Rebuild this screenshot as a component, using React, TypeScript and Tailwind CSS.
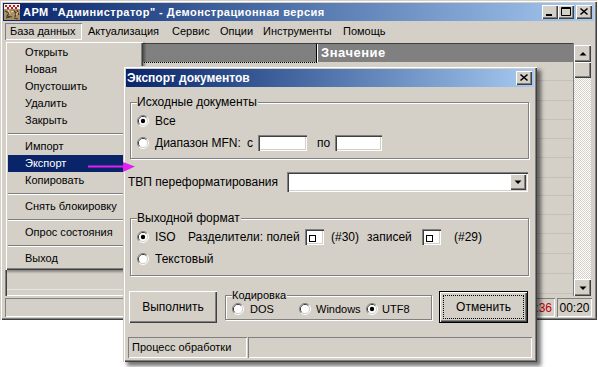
import React from "react";

const FRAME =
  "shadow-[inset_1px_1px_0_#d4d0c8,inset_2px_2px_0_#ffffff,inset_-1px_-1px_0_#404040,inset_-2px_-2px_0_#808080]";
const MENU_FRAME =
  "shadow-[inset_1px_1px_0_#d4d0c8,inset_2px_2px_0_#ffffff,inset_-1px_-1px_0_#404040,inset_-2px_-2px_0_#808080,2px_2px_2px_rgba(0,0,0,0.35)]";
const DIALOG_FRAME =
  "shadow-[inset_1px_1px_0_#d4d0c8,inset_2px_2px_0_#ffffff,inset_-1px_-1px_0_#404040,inset_-2px_-2px_0_#808080,4px_4px_4px_rgba(0,0,0,0.55)]";
const RAISED =
  "shadow-[inset_1px_1px_0_#ffffff,inset_-1px_-1px_0_#404040,inset_-2px_-2px_0_#808080]";
const SUNKEN =
  "shadow-[inset_1px_1px_0_#808080,inset_2px_2px_0_#404040,inset_-1px_-1px_0_#ffffff,inset_-2px_-2px_0_#d4d0c8]";
const THIN_SUNKEN = "shadow-[inset_1px_1px_0_#808080,inset_-1px_-1px_0_#ffffff]";
const GROUP =
  "border border-[#808080] shadow-[1px_1px_0_#ffffff,inset_1px_1px_0_#ffffff]";

function Radio({ checked = false }: { checked?: boolean }) {
  return (
    <svg width="12" height="12" viewBox="0 0 12 12" className="shrink-0">
      <path d="M2.11 9.89A5.5 5.5 0 0 1 9.89 2.11" fill="none" stroke="#808080" />
      <path d="M9.89 2.11A5.5 5.5 0 0 1 2.11 9.89" fill="none" stroke="#ffffff" />
      <path d="M2.82 9.18A4.5 4.5 0 0 1 9.18 2.82" fill="none" stroke="#404040" />
      <path d="M9.18 2.82A4.5 4.5 0 0 1 2.82 9.18" fill="none" stroke="#d4d0c8" />
      <circle cx="6" cy="6" r="4" fill="#ffffff" />
      {checked && <circle cx="6" cy="6" r="2.2" fill="#000000" />}
    </svg>
  );
}

function CapBtn({ kind }: { kind: "min" | "max" | "close" }) {
  return (
    <div className={`w-[16px] h-[14px] bg-[#d4d0c8] ${RAISED}`}>
      <svg width="16" height="14" viewBox="0 0 16 14">
        {kind === "min" && <rect x="4" y="9" width="6" height="2" fill="#000000" />}
        {kind === "max" && (
          <path d="M3.5 2.5h9v8h-9z M3 3.5h10" stroke="#000000" fill="none" />
        )}
        {kind === "close" && (
          <path d="M4.5 3.5l7 6M11.5 3.5l-7 6" stroke="#000000" strokeWidth="1.6" />
        )}
      </svg>
    </div>
  );
}

function Arrow({ dir }: { dir: "up" | "down" }) {
  return (
    <svg width="16" height="16" viewBox="0 0 16 16">
      {dir === "down" ? (
        <polygon points="4.5,6.5 11.5,6.5 8,10" fill="#000000" />
      ) : (
        <polygon points="4.5,9.5 11.5,9.5 8,6" fill="#000000" />
      )}
    </svg>
  );
}

function AppIcon() {
  return (
    <svg width="16" height="16" viewBox="0 0 16 16" className="shrink-0">
      <rect x="0" y="0" width="16" height="16" fill="#a89066" />
      <rect x="0" y="0" width="16" height="5" fill="#f4f0f0" />
      <rect x="1" y="1" width="2" height="2" fill="#c01818" />
      <rect x="5" y="1" width="2" height="2" fill="#c01818" />
      <rect x="9" y="1" width="2" height="2" fill="#c01818" />
      <rect x="13" y="1" width="2" height="2" fill="#c01818" />
      <rect x="3" y="3" width="2" height="2" fill="#c01818" />
      <rect x="7" y="3" width="2" height="2" fill="#c01818" />
      <rect x="11" y="3" width="2" height="2" fill="#c01818" />
      <path d="M1 7l4 2l-2 3l5 1M9 6l3 3l-1 4M13 6l2 5M2 14l4-1M10 14l4 1" stroke="#4a3a22" strokeWidth="1.2" fill="none" />
      <path d="M4 6l2 4M7 8l3-1M12 11l2-3" stroke="#e8dcc0" strokeWidth="1" fill="none" />
    </svg>
  );
}

const menuItems: (string | null)[] = [
  "Открыть",
  "Новая",
  "Опустошить",
  "Удалить",
  "Закрыть",
  null,
  "Импорт",
  "Экспорт",
  "Копировать",
  null,
  "Снять блокировку",
  null,
  "Опрос состояния",
  null,
  "Выход",
];

const menuBar = [
  { t: "Актуализация", w: "w-[84px]" },
  { t: "Сервис", w: "w-[48px]" },
  { t: "Опции", w: "w-[43px]" },
  { t: "Инструменты", w: "w-[80px]" },
  { t: "Помощь", w: "w-[60px]" },
];

const rowHeights = [19, 20, 19, 19, 19, 20, 18, 19, 19, 20, 20, 20];

function SmallBox() {
  return (
    <div className={`w-[19px] h-[16px] bg-white ${SUNKEN} flex items-end pl-[4px] pb-[3px]`}>
      <div className="w-[7px] h-[7px] border border-black" />
    </div>
  );
}

export default function App() {
  return (
    <div className="relative w-[598px] h-[367px] bg-white overflow-hidden font-['Liberation_Sans',Arial,sans-serif] text-black select-none">
      {/* Main window */}
      <div className={`flex flex-col w-[597px] h-[320px] bg-[#d4d0c8] p-[3px] ${FRAME}`}>
        {/* Title bar */}
        <div className="flex items-center h-[18px] bg-linear-to-r from-[#0a246a] to-[#a6caf0] pl-[1px] pr-[2px]">
          <AppIcon />
          <span className="ml-[3px] text-white font-bold text-[11px] leading-none whitespace-nowrap tracking-[0.45px]">
            АРМ "Администратор" - Демонстрационная версия
          </span>
          <div className="ml-auto flex items-center">
            <CapBtn kind="min" />
            <CapBtn kind="max" />
            <div className="ml-[2px]">
              <CapBtn kind="close" />
            </div>
          </div>
        </div>

        {/* Menu bar */}
        <div className="flex items-center h-[21px] pl-[2px] text-[11px]">
          <div className={`h-[17px] w-[77px] pl-[5px] flex items-center ${THIN_SUNKEN}`}>База данных</div>
          {menuBar.map((m) => (
            <div key={m.t} className={`h-[17px] ${m.w} pl-[6px] flex items-center`}>
              {m.t}
            </div>
          ))}
        </div>

        {/* Content */}
        <div className="flex flex-1 min-h-0 pl-[2px] pr-[3px] pt-[1px]">
          <div className="flex flex-1 min-w-0">
            <div className="flex flex-col w-[312px]">
              <div className="h-[19px] bg-[#808080] border-t border-[#404040] border-r border-r-black" />
              <div className="flex-1 flex flex-col min-h-0 overflow-hidden">
                <div className="h-[19px] border-t border-dotted border-black border-b border-b-[#c4c0b8]" />
                {rowHeights.slice(1, 10).map((h, i) => (
                  <div key={i} style={{ height: h }} className="shrink-0 border-b border-[#c4c0b8]" />
                ))}
              </div>
              <div className={`h-[29px] ${SUNKEN} flex flex-col justify-end pb-[6px] px-[2px]`}>
                <div className="h-[1px] bg-[#e8e6e0]" />
              </div>
            </div>
            <div className="flex flex-col flex-1 min-w-0 border-r border-[#808080]">
              <div className="h-[19px] bg-[#808080] border-t border-[#404040] shadow-[inset_1px_0_0_#ffffff] flex items-center pl-[4px] text-white font-bold text-[13px] tracking-[0.5px]">
                Значение
              </div>
              <div className="flex-1 flex flex-col min-h-0 overflow-hidden">
                {rowHeights.map((h, i) => (
                  <div key={i} style={{ height: h }} className="shrink-0 border-b border-[#c4c0b8]" />
                ))}
              </div>
            </div>
          </div>
          {/* Scrollbar */}
          <div className="w-[17px] flex flex-col pt-[2px]">
            <div className={`h-[17px] bg-[#d4d0c8] ${RAISED} flex items-center justify-center`}>
              <Arrow dir="up" />
            </div>
            <div className={`h-[16px] bg-[#d4d0c8] ${RAISED}`} />
            <div className="flex-1 bg-[repeating-conic-gradient(#ffffff_0%_25%,#d4d0c8_0%_50%)] bg-[length:2px_2px]" />
            <div className={`h-[17px] bg-[#d4d0c8] ${RAISED} flex items-center justify-center`}>
              <Arrow dir="down" />
            </div>
          </div>
        </div>

        {/* Status bar */}
        <div className="flex h-[19px] mt-[2px] gap-[2px] px-[2px] text-[12px]">
          <div className={`flex-1 ${THIN_SUNKEN}`} />
          <div className={`w-[96px] flex items-center justify-end pr-[3px] ${THIN_SUNKEN}`}>
            <span>:</span>
            <span className="text-[#c00000]">36</span>
          </div>
          <div className={`w-[35px] flex items-center justify-center ${THIN_SUNKEN}`}>00:20</div>
        </div>
      </div>

      {/* Dropdown menu */}
      <div className={`absolute left-[5px] top-[41px] w-[138px] bg-[#d4d0c8] p-[3px] flex flex-col text-[11px] ${MENU_FRAME}`}>
        {menuItems.map((it, i) =>
          it === null ? (
            <div key={i} className="h-[9px] flex items-center">
              <div className="w-full h-[2px] border-t border-t-[#808080] border-b border-b-white" />
            </div>
          ) : (
            <div
              key={i}
              className={`h-[17px] flex items-center pl-[17px] ${it === "Экспорт" ? "bg-[#0a246a] text-white" : ""}`}
            >
              {it}
            </div>
          )
        )}
      </div>

      {/* Dialog */}
      <div className={`absolute left-[123px] top-[66px] w-[414px] h-[296px] bg-[#d4d0c8] p-[3px] flex flex-col ${DIALOG_FRAME}`}>
        <div className="h-[18px] flex items-center bg-linear-to-r from-[#0a246a] to-[#a6caf0] pl-[1px] pr-[2px]">
          <span className="text-white font-bold text-[12px] leading-none">Экспорт документов</span>
          <div className="ml-auto">
            <CapBtn kind="close" />
          </div>
        </div>

        <div className="flex flex-col px-[2px] text-[12px]">
          {/* Group 1 */}
          <fieldset className={`ml-[2px] mr-[3px] mt-[8px] px-[6px] pb-[4px] ${GROUP}`}>
            <legend className="pr-[1px] bg-[#d4d0c8] leading-[15px]">Исходные документы</legend>
            <div className="flex items-center h-[22px]">
              <Radio checked />
              <span className="ml-[6px]">Все</span>
            </div>
            <div className="flex items-center h-[22px]">
              <Radio />
              <div className="ml-[6px] w-[103px] flex items-center">
                <span>Диапазон MFN:</span>
                <span className="ml-auto mr-[5px]">с</span>
              </div>
              <div className={`w-[49px] h-[16px] bg-white ${SUNKEN}`} />
              <span className="ml-[10px] w-[18px]">по</span>
              <div className={`w-[47px] h-[16px] bg-white ${SUNKEN}`} />
            </div>
          </fieldset>

          {/* TVP */}
          <div className="flex items-center mt-[13px] h-[20px]">
            <span className="w-[159px]">ТВП переформатирования</span>
            <div className={`w-[241px] h-[20px] bg-white ${SUNKEN} flex justify-end p-[2px]`}>
              <div className={`w-[16px] h-[16px] bg-[#d4d0c8] ${RAISED}`}>
                <Arrow dir="down" />
              </div>
            </div>
          </div>

          {/* Group 2 */}
          <fieldset className={`ml-[2px] mr-[3px] mt-[19px] px-[6px] pb-[5px] ${GROUP}`}>
            <legend className="pr-[1px] bg-[#d4d0c8] leading-[15px]">Выходной формат</legend>
            <div className="flex items-center h-[22px]">
              <Radio checked />
              <span className="ml-[6px] w-[33px]">ISO</span>
              <span className="w-[117px] whitespace-nowrap">Разделители: полей</span>
              <SmallBox />
              <span className="ml-[7px] w-[36px]">(#30)</span>
              <span className="w-[55px]">записей</span>
              <div className="w-[20px]">
                <SmallBox />
              </div>
              <span className="ml-[12px]">(#29)</span>
            </div>
            <div className="flex items-center h-[22px]">
              <Radio />
              <span className="ml-[6px]">Текстовый</span>
            </div>
          </fieldset>

          {/* Buttons row */}
          <div className="flex items-start mt-[13px]">
            <div className={`mt-[2px] ml-[1px] w-[88px] h-[32px] flex items-center justify-center ${RAISED}`}>
              Выполнить
            </div>
            <fieldset className={`ml-[8px] w-[207px] px-[6px] pb-[3px] ${GROUP}`}>
              <legend className="pr-[1px] bg-[#d4d0c8] text-[11px] leading-[13px]">Кодировка</legend>
              <div className="flex items-center h-[14px] text-[11px]">
                <div className="w-[67px] flex items-center">
                  <Radio />
                  <span className="ml-[6px]">DOS</span>
                </div>
                <div className="w-[67px] flex items-center">
                  <Radio />
                  <span className="ml-[5px]">Windows</span>
                </div>
                <div className="flex items-center">
                  <Radio checked />
                  <span className="ml-[4px]">UTF8</span>
                </div>
              </div>
            </fieldset>
            <div className="ml-[7px] mt-[2px] w-[89px] h-[32px] border border-black">
              <div className={`w-full h-full p-[3px] ${RAISED}`}>
                <div className="w-full h-full border border-dotted border-black flex items-center justify-center">
                  Отменить
                </div>
              </div>
            </div>
          </div>

          {/* Status bar */}
          <div className="flex mt-[14px] h-[21px] gap-[1px]">
            <div className={`w-[119px] flex items-center pl-[4px] text-[11px] ${THIN_SUNKEN}`}>
              Процесс обработки
            </div>
            <div className={`flex-1 ${THIN_SUNKEN}`} />
          </div>
        </div>
      </div>

      {/* Magenta arrow */}
      <svg className="absolute left-[86px] top-[160px]" width="50" height="14" viewBox="0 0 50 14">
        <line x1="2" y1="6.5" x2="38" y2="6.5" stroke="#e020f0" strokeWidth="2" />
        <polygon points="37,2 49,6.5 37,12" fill="#e020f0" />
      </svg>
    </div>
  );
}
